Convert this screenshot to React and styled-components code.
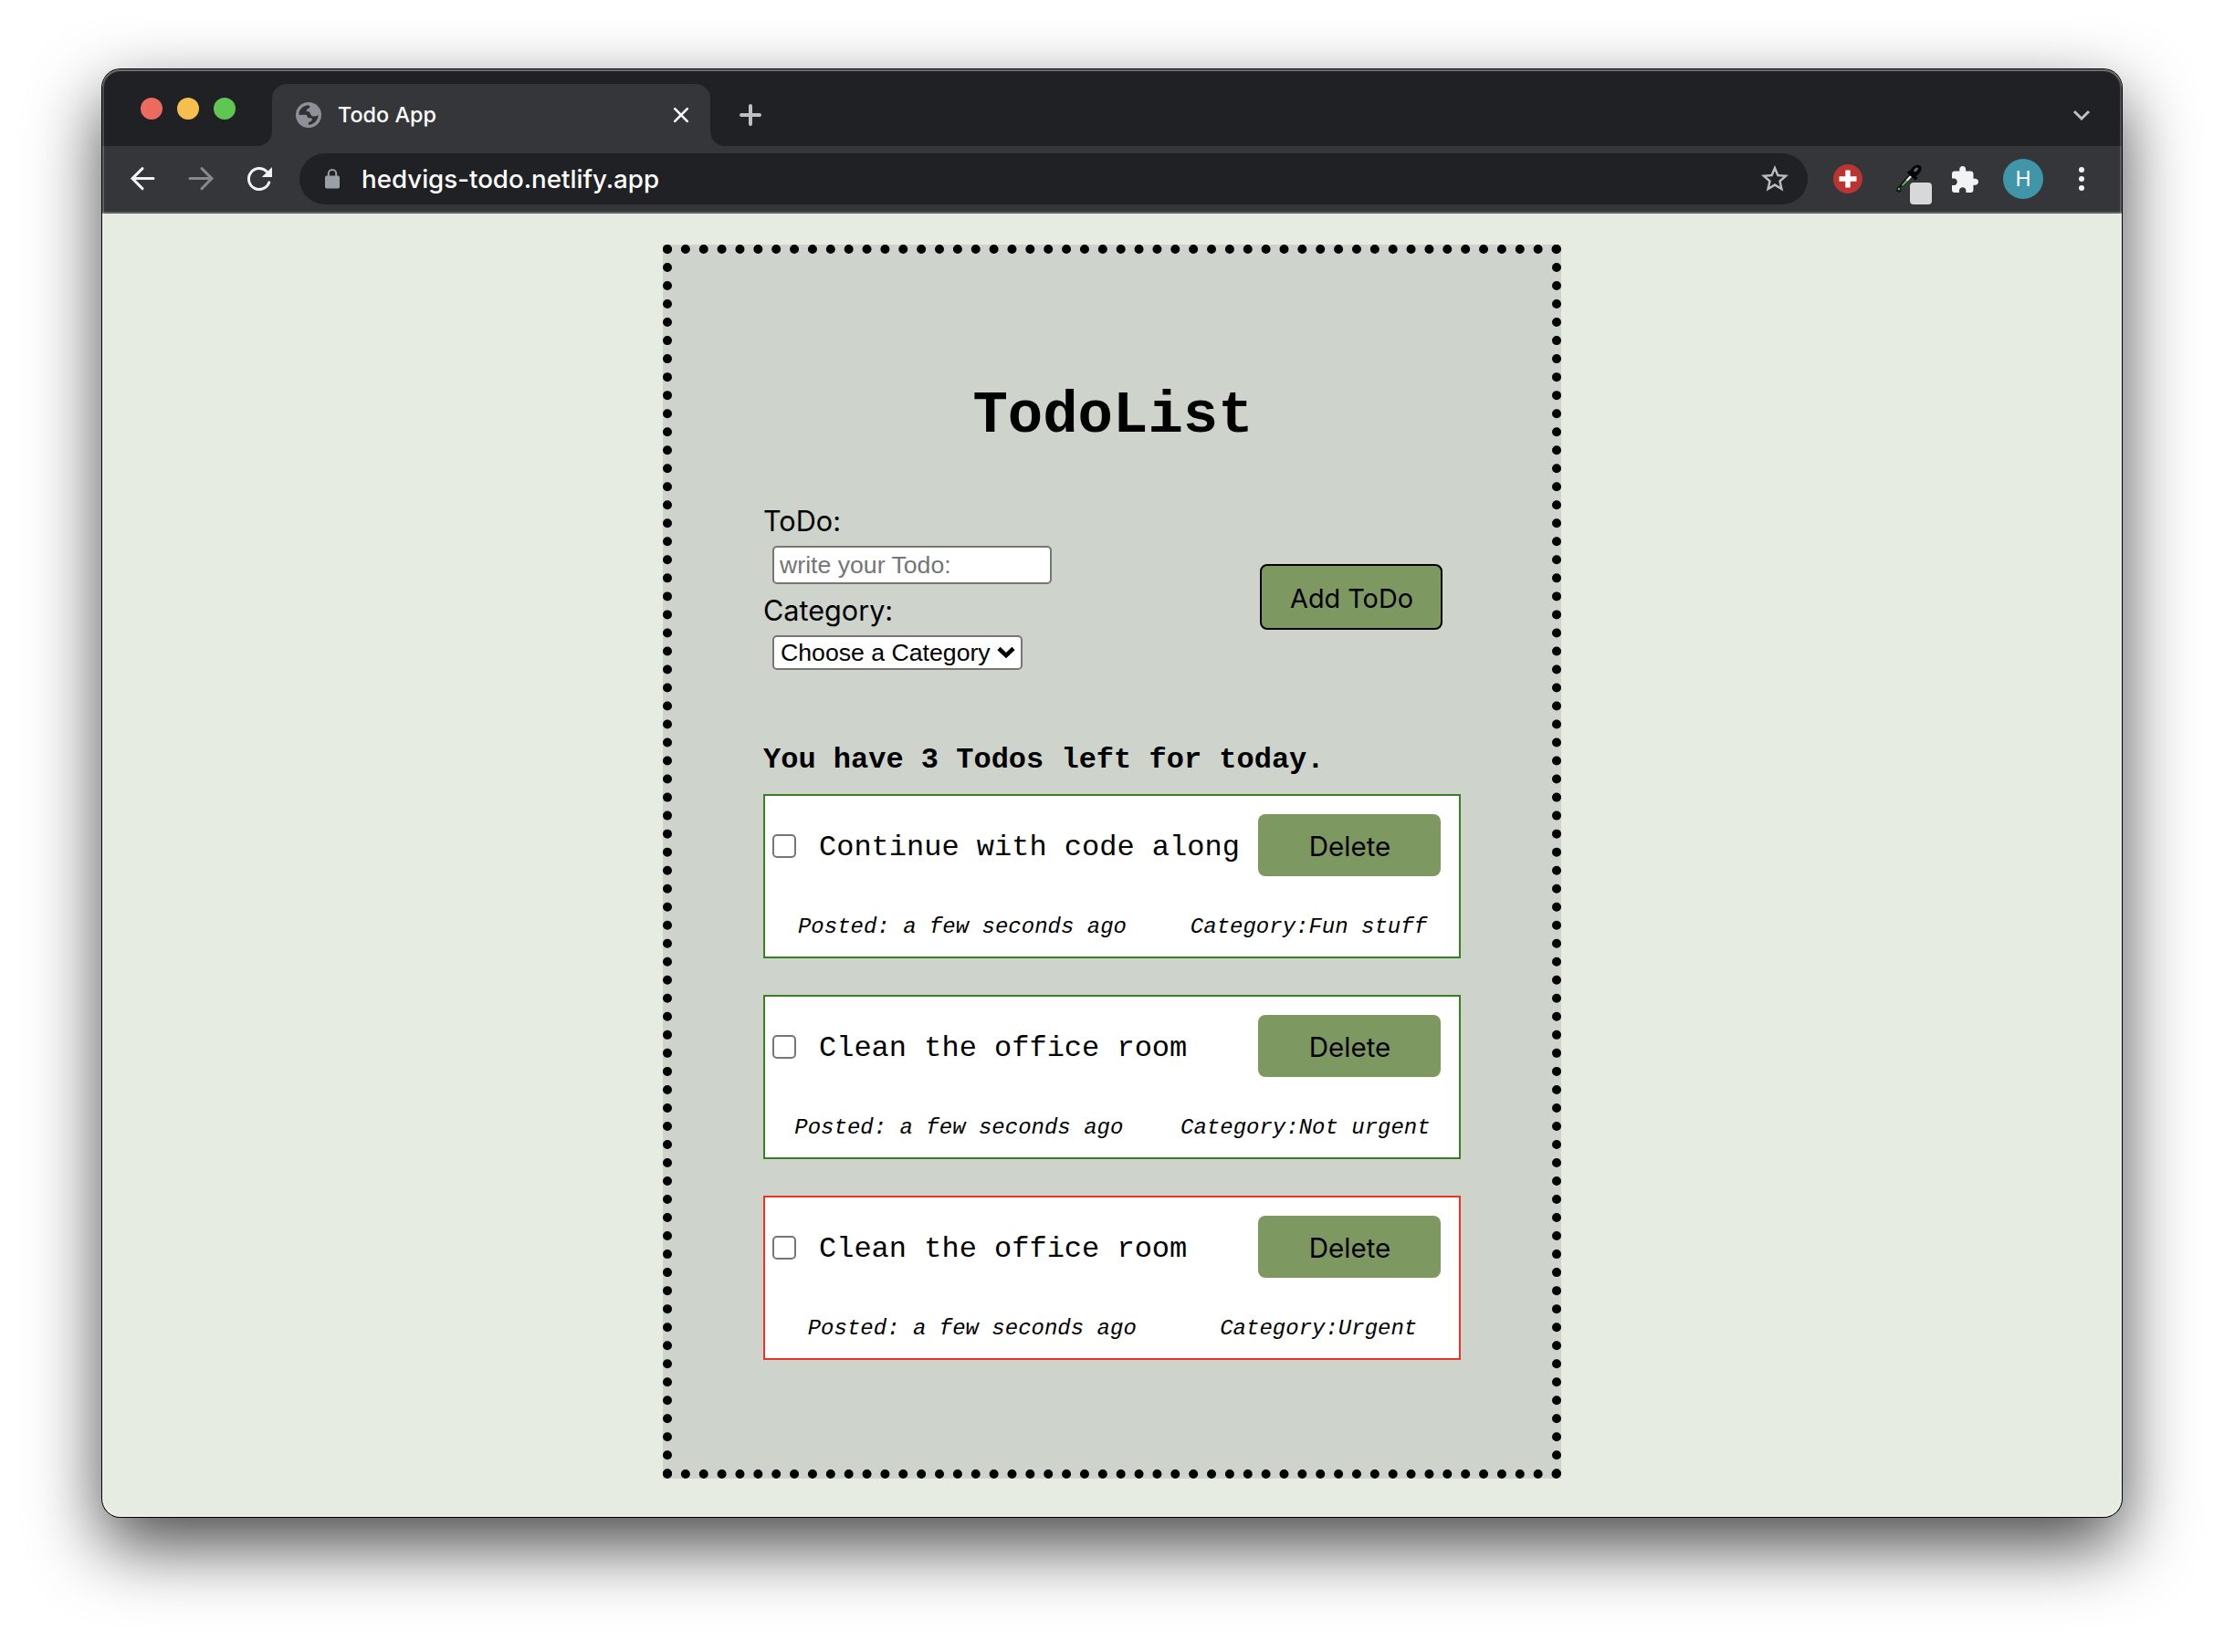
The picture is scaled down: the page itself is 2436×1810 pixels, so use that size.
import React from 'react';
import styled, { createGlobalStyle } from 'styled-components';

const ui = `Inter, "Liberation Sans", sans-serif`;
const mono = `"Courier New", "Liberation Mono", monospace`;
const control = `"Liberation Sans", Arial, sans-serif`;

const GlobalStyle = createGlobalStyle`
  * { box-sizing: border-box; }
  body { margin: 0; background: #fff; }
  h1, h2, p { margin: 0; }
  svg { display: block; flex: none; }
`;

const Desktop = styled.div`
  width: 2436px;
  height: 1810px;
  padding: 76px 112px 0;
  overflow: hidden;
`;

const Window = styled.div`
  position: relative;
  display: flex;
  flex-direction: column;
  height: 1586px;
  border-radius: 20px;
  overflow: hidden;
  background: #e6ece1;
  box-shadow: 0 0 0 1px #000, 0 31px 78px rgba(0, 0, 0, 0.72);

  &::after {
    content: '';
    position: absolute;
    inset: 0;
    border-radius: inherit;
    pointer-events: none;
    box-shadow: inset 0 0 0 2px rgba(255, 255, 255, 0.2), inset 0 2px 0 0 rgba(255, 255, 255, 0.18);
  }
`;

const TabStrip = styled.div`
  display: flex;
  align-items: flex-end;
  height: 84px;
  padding-left: 42px;
  background: #202124;
`;

const Lights = styled.div`
  display: flex;
  gap: 16px;
  margin: 0 40px 29px 0;
`;

const Light = styled.span`
  width: 24px;
  height: 24px;
  border-radius: 50%;
  background: ${(p) => p.$color};
`;

const Tab = styled.div`
  position: relative;
  display: flex;
  align-items: center;
  gap: 18px;
  width: 480px;
  height: 68px;
  padding: 0 22px 0 26px;
  border-radius: 16px 16px 0 0;
  background: #35363a;

  &::before,
  &::after {
    content: '';
    position: absolute;
    bottom: 0;
    width: 16px;
    height: 16px;
  }
  &::before {
    right: 100%;
    background: radial-gradient(circle at 0 0, transparent 15.5px, #35363a 16.5px);
  }
  &::after {
    left: 100%;
    background: radial-gradient(circle at 100% 0, transparent 15.5px, #35363a 16.5px);
  }
`;

const TabTitle = styled.span`
  flex: 1;
  font: 500 23.4px/32px ${ui};
  color: #fff;
`;

const NewTab = styled.div`
  flex: 1;
  padding: 0 0 22px 32px;
`;

const TabSearch = styled.div`
  padding: 0 34px 24px 0;
`;

const Toolbar = styled.div`
  display: flex;
  align-items: center;
  height: 74px;
  padding-left: 28px;
  background: #35363a;
  border-bottom: 2px solid #606165;
`;

const NavButtons = styled.div`
  display: flex;
  gap: 32px;
  margin-right: 28px;
`;

const Omnibox = styled.div`
  display: flex;
  align-items: center;
  width: 1652px;
  height: 56px;
  padding: 0 18px 0 28px;
  border-radius: 28px;
  background: #202124;
`;

const Url = styled.span`
  flex: 1;
  margin-left: 24px;
  font: 500 27.7px/36px ${ui};
  color: #fff;
`;

const Extensions = styled.div`
  display: flex;
  align-items: center;
  margin-left: 28px;
`;

const Slot = styled.div`
  margin-left: ${(p) => p.$gap}px;
`;

const Avatar = styled.div`
  width: 44px;
  height: 44px;
  margin-left: 27px;
  border-radius: 50%;
  background: #4096a8;
  font: 400 23px/44px ${ui};
  text-align: center;
  color: #fff;
`;

const Page = styled.main`
  display: flex;
  flex: 1;
  justify-content: center;
  align-items: flex-start;
  padding-top: 34px;
  color: #000;
`;

const Board = styled.section`
  width: 984px;
  height: 1352px;
  padding: 142px 100px 0;
  border: 10px dotted #000;
  background: #ced3cb;
`;

const Title = styled.h1`
  padding-left: 2px;
  font: 700 64px/72px ${mono};
  text-align: center;
`;

const Form = styled.form`
  display: flex;
  justify-content: space-between;
  align-items: flex-start;
  height: 181px;
  margin-top: 61px;
  padding-right: 20px;
`;

const Fields = styled.div`
  display: flex;
  flex-direction: column;
  align-items: flex-start;
`;

const Label = styled.label`
  font: 400 30.6px/36px ${ui};
`;

const TextInput = styled.input`
  width: 306px;
  height: 42px;
  margin: 9px 0 11px 10px;
  padding: 2px 6px;
  border: 2px solid #767676;
  border-radius: 5px;
  background: #fff;
  font: 400 26.67px/34px ${control};
  &::placeholder { color: #757575; opacity: 1; }
`;

const SelectBox = styled.div`
  position: relative;
  margin: 9px 0 0 10px;
  svg { position: absolute; right: 8px; top: 11px; pointer-events: none; }
`;

const Select = styled.select`
  display: block;
  appearance: none;
  width: 274px;
  height: 38px;
  padding: 1px 0 0 7px;
  border: 2px solid #767676;
  border-radius: 5px;
  background: #fff;
  color: #000;
  font: 400 26.67px/33px ${control};
`;

const Button = styled.button`
  flex: none;
  width: 200px;
  height: ${(p) => (p.$outlined ? 72 : 68)}px;
  margin-top: ${(p) => (p.$outlined ? 65 : 0)}px;
  padding: ${(p) => (p.$outlined ? 4 : 2)}px 0 0 1px;
  border: ${(p) => (p.$outlined ? '2px solid #000' : '0')};
  border-radius: 8px;
  background: #7d9860;
  color: #000;
  font: 400 ${(p) => (p.$outlined ? 28.8 : 29.5)}px/36px ${ui};
`;

const Summary = styled.h2`
  margin: 81px 0 19px;
  font: 700 32px/36px ${mono};
`;

const List = styled.div`
  display: flex;
  flex-direction: column;
  gap: 40px;
`;

const Card = styled.article`
  height: 180px;
  padding-top: 20px;
  border: 2px solid ${(p) => (p.$urgent ? '#eb3323' : '#377f22')};
  background: #fff;
`;

const CardTop = styled.div`
  display: flex;
  align-items: center;
  height: 68px;
  padding: 0 20px 0 8px;
`;

const Checkbox = styled.input`
  appearance: none;
  width: 26px;
  height: 26px;
  margin: 2px 25px 0 0;
  border: 2px solid #767676;
  border-radius: 5px;
  background: #fff;
`;

const Task = styled.p`
  flex: 1;
  padding-top: 5px;
  font: 400 32px/36px ${mono};
  white-space: nowrap;
`;

const Meta = styled.div`
  display: flex;
  justify-content: space-around;
  margin-top: 42px;
  padding-left: 1px;
  font: italic 400 24px/28px ${mono};
`;

const todos = [
  { text: 'Continue with code along', category: 'Fun stuff' },
  { text: 'Clean the office room', category: 'Not urgent' },
  { text: 'Clean the office room', category: 'Urgent', urgent: true },
];

const Arrow = ({ color, flip }) => (
  <svg width="32" height="32" viewBox="0 0 32 32" fill="none" stroke={color} strokeWidth="3" strokeLinecap="round">
    <path d={flip ? 'M4 15.6h24M17 4.6l11 11-11 11' : 'M28 15.6h-23M16 4.6l-11 11 11 11'} />
  </svg>
);

const Reload = () => (
  <svg width="32" height="32" viewBox="0 0 32 32">
    <path d="M26.8 19.8A11.5 11.5 0 1 1 24.2 8" fill="none" stroke="#f1f3f4" strokeWidth="3" strokeLinecap="round" />
    <path d="M30 3v11H18.8z" fill="#f1f3f4" />
  </svg>
);

const Globe = () => (
  <svg width="28" height="28" viewBox="0 0 28 28">
    <circle cx="14" cy="14" r="14" fill="#8b9197" />
    <path
      d="M3.3 13.6C3.4 8.2 7.3 4 13 3.3c1.5.2 2.8.9 2.4 2.2-.5 1.5-3.2 1.3-3.6 3.2-.2 1.2.6 1.5 2 1.6 2.2.1 1.8 3 3.4 4.4 1.5 1.2 4 .9 7.5-.8-.2 5.7-4.6 10.4-10.7 10.8-.5-1.2-.4-2.3.8-2.9 1.6-.8 3.3-1.3 3.1-3.2-.2-1.5-2.4-1.1-3.9-1.3-1.7-.3-1-2-2-3-1.5-1.4-5 .3-8.7-.7z"
      fill="#303135"
    />
  </svg>
);

const Lock = () => (
  <svg width="16" height="22" viewBox="0 0 16 22">
    <path d="M3.8 9V5.2a4.2 4.2 0 0 1 8.4 0V9" fill="none" stroke="#9aa0a6" strokeWidth="2" />
    <rect x="0" y="7.5" width="16" height="14" rx="1.8" fill="#9aa0a6" />
  </svg>
);

const Star = () => (
  <svg width="36" height="36" viewBox="0 0 24 24" fill="#bdbdbd">
    <path d="M22 9.24l-7.19-.62L12 2 9.19 8.63 2 9.24l5.46 4.73L5.82 21 12 17.27 18.18 21l-1.63-7.03L22 9.24zM12 15.4l-3.76 2.27 1-4.28-3.32-2.88 4.38-.38L12 6.1l1.71 4.04 4.38.38-3.32 2.88 1 4.28L12 15.4z" />
  </svg>
);

const RedCross = () => (
  <svg width="32" height="32" viewBox="0 0 32 32">
    <circle cx="16" cy="16" r="16" fill="#ba3532" />
    <path d="M13.3 6.5h5.4v6.8h6.8v5.4h-6.8v6.8h-5.4v-6.8H6.5v-5.4h6.8z" fill="#fff" />
  </svg>
);

const Dropper = () => (
  <svg width="44" height="56" viewBox="0 0 44 56">
    <g transform="translate(-1 9.5)">
      <path d="M17 12.8 6.4 24.5l-.8 3.2 3.2-1L20.8 16z" fill="#111" />
      <path d="M17.3 14.5 12.6 19.8l1.8 1.5 5-5.2z" fill="#e4eee6" />
      <path d="M12.6 19.8 7.8 25.4l1.2.8 5.4-4.9z" fill="#62b96b" />
      <path d="M14.2 11.6l2-1.8 9 8-2.4 1.6z" fill="#050505" stroke="#050505" strokeWidth="1" strokeLinejoin="round" />
      <ellipse cx="23.2" cy="9.6" rx="7.6" ry="5" transform="rotate(-45 23.2 9.6)" fill="#050505" />
      <ellipse cx="23.6" cy="8.4" rx="3" ry="1.5" transform="rotate(-45 23.6 8.4)" fill="#666" />
      <path d="M5 26c1.8 2 2.5 3.2 2.5 4.4a2.6 2.6 0 0 1-5.2 0C2.3 28.9 3.3 27.3 5 26z" fill="#111" />
      <circle cx="5" cy="29.6" r="1.3" fill="#62b96b" />
    </g>
    <rect x="16" y="32" width="24" height="24" rx="4" fill="#d8d8d8" />
  </svg>
);

const Puzzle = () => (
  <svg width="29" height="29" viewBox="2 1 21 21" fill="#f1f3f4">
    <path d="M20.5 11H19V7c0-1.1-.9-2-2-2h-4V3.5C13 2.12 11.88 1 10.5 1S8 2.12 8 3.5V5H4c-1.1 0-1.99.9-1.99 2v3.8H3.5c1.49 0 2.7 1.21 2.7 2.7s-1.21 2.7-2.7 2.7H2V20c0 1.1.9 2 2 2h3.8v-1.5c0-1.49 1.21-2.7 2.7-2.7s2.7 1.21 2.7 2.7V22H17c1.1 0 2-.9 2-2v-4h1.5c1.38 0 2.5-1.12 2.5-2.5S21.88 11 20.5 11z" />
  </svg>
);

export default function App() {
  return (
    <Desktop>
      <GlobalStyle />
      <Window>
        <TabStrip>
          <Lights>
            <Light $color="#ed6a5e" />
            <Light $color="#f5bf4f" />
            <Light $color="#61c554" />
          </Lights>
          <Tab>
            <Globe />
            <TabTitle>Todo App</TabTitle>
            <svg width="20" height="20" viewBox="0 0 20 20" stroke="#fff" strokeWidth="2.6" strokeLinecap="round">
              <path d="M3.2 3.2l13.6 13.6M16.8 3.2L3.2 16.8" />
            </svg>
          </Tab>
          <NewTab>
            <svg width="24" height="24" viewBox="0 0 24 24" stroke="#bdc1c6" strokeWidth="4" strokeLinecap="round">
              <path d="M12 2v20M2 12h20" />
            </svg>
          </NewTab>
          <TabSearch>
            <svg width="20" height="20" viewBox="0 0 20 20" fill="none" stroke="#bdc1c6" strokeWidth="3">
              <path d="M2 6l8 8 8-8" />
            </svg>
          </TabSearch>
        </TabStrip>
        <Toolbar>
          <NavButtons>
            <Arrow color="#f1f3f4" />
            <Arrow color="#87888b" flip />
            <Reload />
          </NavButtons>
          <Omnibox>
            <Lock />
            <Url>hedvigs-todo.netlify.app</Url>
            <Star />
          </Omnibox>
          <Extensions>
            <RedCross />
            <Slot $gap={36}><Dropper /></Slot>
            <Slot $gap={18}><Puzzle /></Slot>
            <Avatar>H</Avatar>
            <Slot $gap={39}>
              <svg width="6" height="26" viewBox="0 0 6 26" fill="#f1f3f4">
                <circle cx="3" cy="3" r="3" />
                <circle cx="3" cy="13" r="3" />
                <circle cx="3" cy="23" r="3" />
              </svg>
            </Slot>
          </Extensions>
        </Toolbar>
        <Page>
          <Board>
            <Title>TodoList</Title>
            <Form onSubmit={(e) => e.preventDefault()}>
              <Fields>
                <Label htmlFor="todo">ToDo:</Label>
                <TextInput id="todo" placeholder="write your Todo:" />
                <Label htmlFor="category">Category:</Label>
                <SelectBox>
                  <Select id="category">
                    <option>Choose a Category</option>
                  </Select>
                  <svg width="20" height="16" viewBox="0 0 20 16" fill="none" stroke="#000" strokeWidth="4.6">
                    <path d="M2 3.5l8 7.6 8-7.6" />
                  </svg>
                </SelectBox>
              </Fields>
              <Button $outlined>Add ToDo</Button>
            </Form>
            <Summary>You have 3 Todos left for today.</Summary>
            <List>
              {todos.map((t, i) => (
                <Card key={i} $urgent={t.urgent}>
                  <CardTop>
                    <Checkbox type="checkbox" aria-label={t.text} />
                    <Task>{t.text}</Task>
                    <Button type="button">Delete</Button>
                  </CardTop>
                  <Meta>
                    <span>Posted: a few seconds ago</span>
                    <span>Category:{t.category}</span>
                  </Meta>
                </Card>
              ))}
            </List>
          </Board>
        </Page>
      </Window>
    </Desktop>
  );
}
